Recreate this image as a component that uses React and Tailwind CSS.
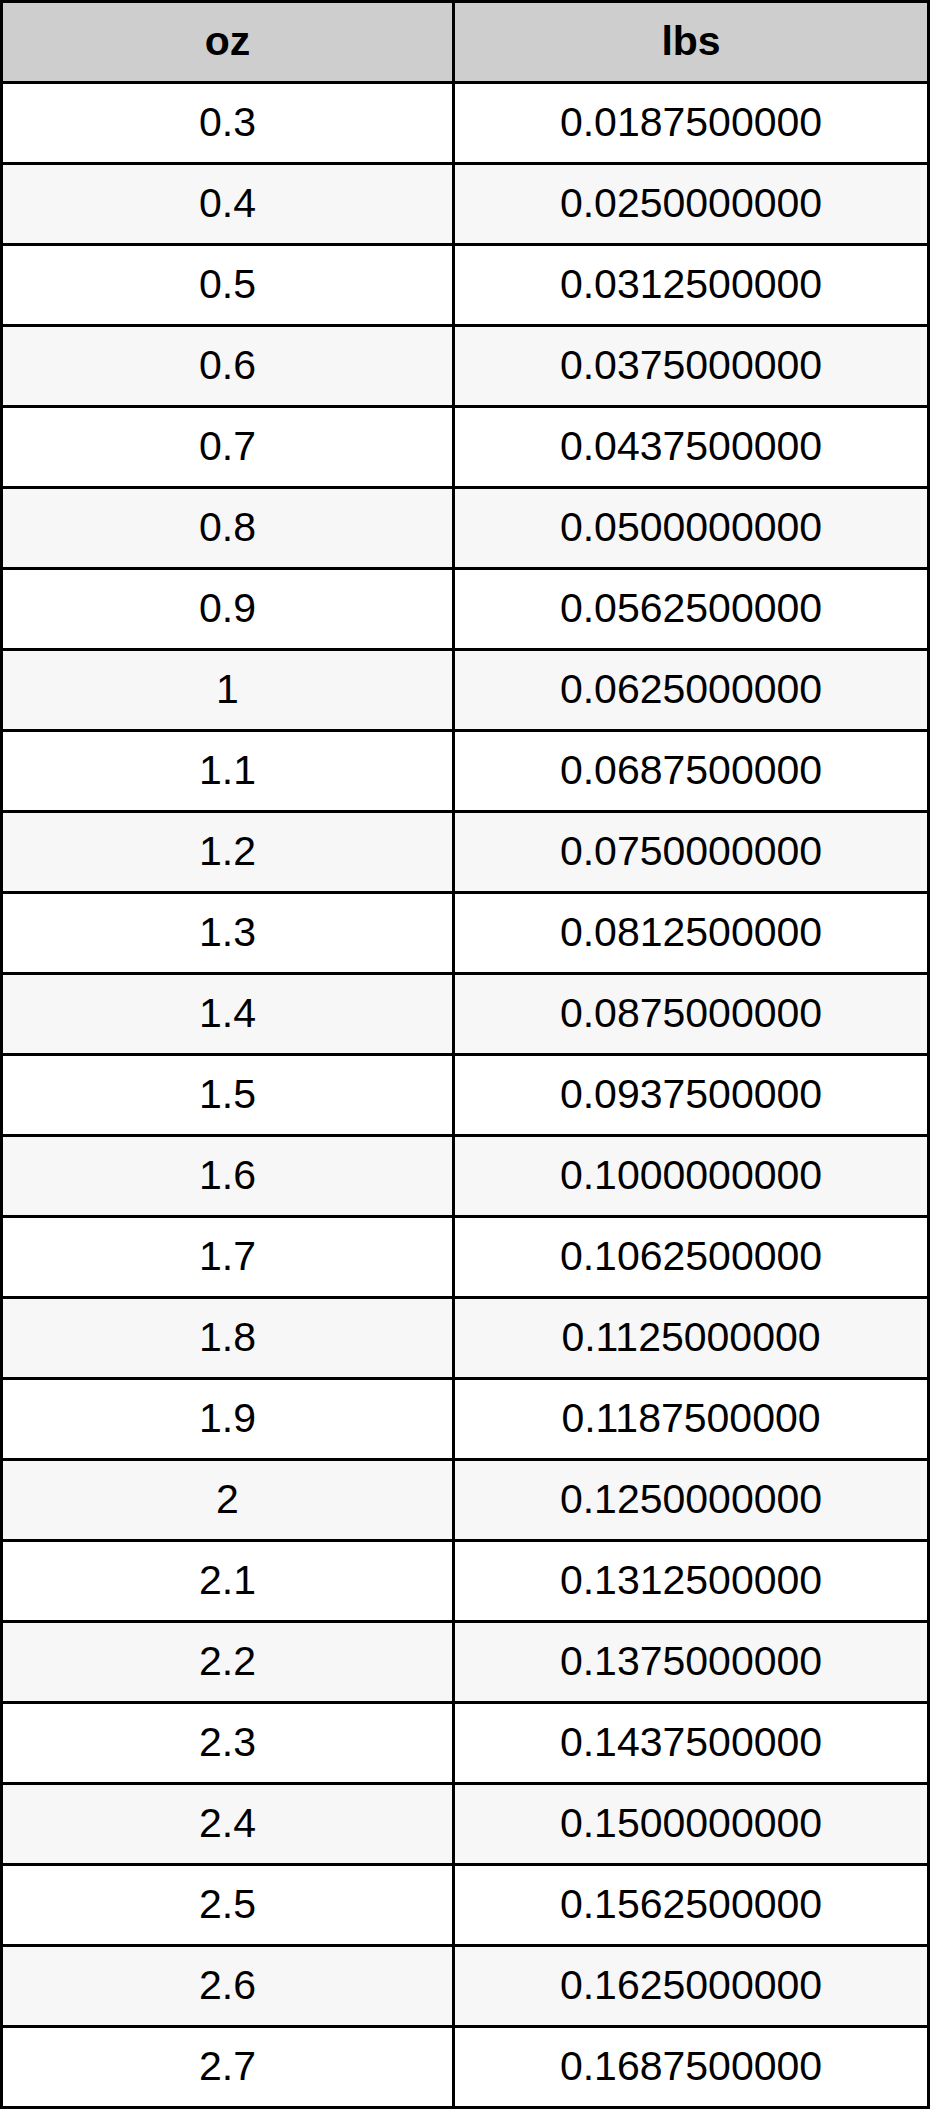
import React from 'react';

const OZ = ['0.3', '0.4', '0.5', '0.6', '0.7', '0.8', '0.9', '1', '1.1', '1.2', '1.3', '1.4', '1.5', '1.6', '1.7', '1.8', '1.9', '2', '2.1', '2.2', '2.3', '2.4', '2.5', '2.6', '2.7'];

export default function App() {
	return (
		<div className="w-[930px] bg-white" style={{ fontFamily: '"Liberation Sans", Arial, sans-serif' }}>
			<div className="grid grid-cols-[449px_472px] gap-[3px] bg-black p-[3px] text-black">
				<div className="flex h-[78px] items-center justify-center bg-[#cecece] text-[41px] font-bold">oz</div>
				<div className="flex h-[78px] items-center justify-center bg-[#cecece] text-[41px] font-bold">lbs</div>
				{OZ.map((oz, i) => {
					// filas alternas en gris claro
					const bg = i % 2 === 1 ? 'bg-[#f7f7f7]' : 'bg-white';
					return (
						<React.Fragment key={oz}>
							<div className={`flex h-[78px] items-center justify-center text-[41px] ${bg}`}>{oz}</div>
							<div className={`flex h-[78px] items-center justify-center text-[41px] ${bg}`}>
								{(parseFloat(oz) / 16).toFixed(10)}
							</div>
						</React.Fragment>
					);
				})}
			</div>
		</div>
	);
}
